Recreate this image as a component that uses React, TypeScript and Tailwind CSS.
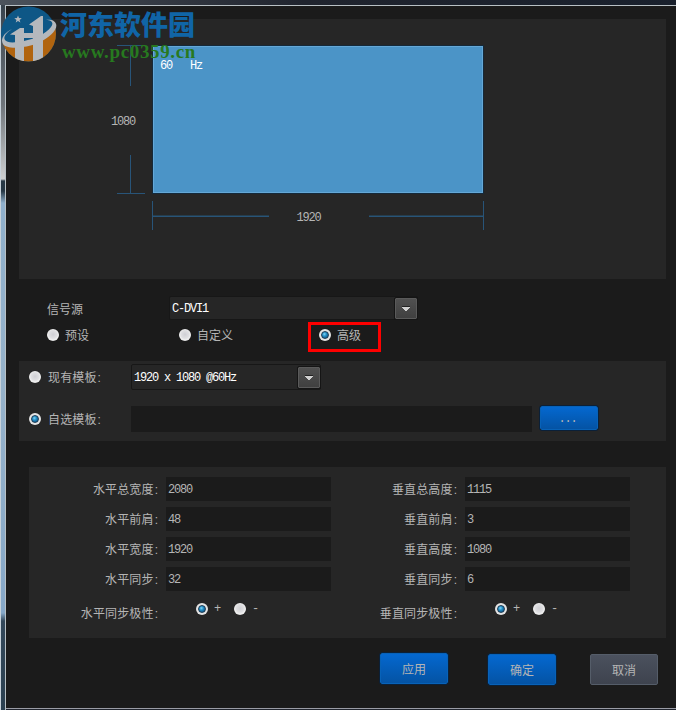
import clsx from "clsx";

const horizontalFields = [
  { label: "水平总宽度", value: "2080" },
  { label: "水平前肩", value: "48" },
  { label: "水平宽度", value: "1920" },
  { label: "水平同步", value: "32" },
];

const verticalFields = [
  { label: "垂直总高度", value: "1115" },
  { label: "垂直前肩", value: "3" },
  { label: "垂直高度", value: "1080" },
  { label: "垂直同步", value: "6" },
];

const Radio = ({ checked = false }: { checked?: boolean }) => (
  <span
    className={clsx(
      "flex size-3 shrink-0 items-center justify-center rounded-full",
      checked
        ? "bg-[#e4e4e4]"
        : "bg-[radial-gradient(circle_at_50%_45%,#cfcfd4_0%,#e0e0e2_45%,#f0f0f0_62%,#a8a8a8_100%)]"
    )}
  >
    {checked && (
      <span className="size-2 rounded-full border border-[#1d3c55] bg-[radial-gradient(circle_at_40%_35%,#7cd3f5_0%,#218cc4_40%,#0c3f6c_100%)]" />
    )}
  </span>
);

const Label = ({ children, className }: { children: string; className?: string }) => (
  <span className={clsx("pt-[3px] tracking-[0.15px]", className)}>
    {children}
    <span className="mr-px ml-px font-['Liberation_Sans',sans-serif] tracking-normal">:</span>
  </span>
);

const Select = ({ value, className }: { value: string; className: string }) => (
  <div
    className={clsx(
      "flex items-center justify-between rounded-[2px] border border-[#171717] bg-[#262626] text-white",
      className
    )}
  >
    <span className="pt-0.5">{value}</span>
    <span className="flex h-[21px] w-[22px] items-center justify-center rounded-[1px] border border-[#5a5a5a] bg-linear-to-b from-[#505050] to-[#404040] outline outline-[#151515]">
      <svg width="8" height="5" viewBox="0 0 8 5" shapeRendering="crispEdges">
        <path d="M0 0h8v1H0z" fill="#222" />
        <path d="M0 1h8v1H7v1H6v1H5v1H3V4H2V3H1V2H0z" fill="#d0d0d0" />
      </svg>
    </span>
  </div>
);

const Button = ({
  children,
  secondary = false,
  className,
}: {
  children: string;
  secondary?: boolean;
  className: string;
}) => (
  <button
    className={clsx(
      "flex items-center justify-center rounded-[2px] border",
      secondary
        ? "border-[#555d69] bg-linear-to-b from-[#4b515e] to-[#3e434e]"
        : "border-[#0762b8] bg-linear-to-b from-[#0468d0] to-[#0453a4] outline outline-[#0b2038]",
      className
    )}
  >
    {children}
  </button>
);

const Timing = ({
  fields,
  polarity,
}: {
  fields: { label: string; value: string }[];
  polarity: string;
}) => (
  <div className="w-[299px]">
    <div className="flex flex-col gap-1.5">
      {fields.map((field) => (
        <div key={field.label} className="flex h-6 items-center">
          <Label className="w-[130px] shrink-0 text-right">{field.label}</Label>
          <span className="ml-[7px] flex h-6 w-[165px] shrink-0 items-center bg-[#1b1b1b] pt-0.5 pl-0.5">
            {field.value}
          </span>
        </div>
      ))}
    </div>
    <div className="mt-3 flex h-3 items-center">
      <Label className="mt-2 w-[130px] shrink-0 text-right">{polarity}</Label>
      <span className="ml-[37px] flex items-center">
        <Radio checked />
        <span className="ml-1.5 w-5">+</span>
        <Radio />
        <span className="ml-1.5">-</span>
      </span>
    </div>
  </div>
);

const Watermark = () => (
  <div className="absolute top-1.5 left-0 flex items-start">
    <svg width="57" height="57" viewBox="0 0 57 57">
      <defs>
        <clipPath id="badge">
          <circle cx="28.5" cy="28" r="27.5" />
        </clipPath>
      </defs>
      <g clipPath="url(#badge)">
        <path d="M0 0h57v57H0z" fill="#0e5786" />
        <path d="M0 36Q30 48 57 18V57H0z" fill="#b1640f" />
        <path
          d="M10 28.5L20 22h4v35h-9V29zM29 18.5L41 10h2v43l-10 4V20zM24 27h9v5h-9z"
          fill="#b4b8bd"
        />
      </g>
      <path
        d="M12 23C4 27 0 33 3 38C7 44 26 42 38 37C51 31 58 23 56 18C55 14 50 13 46 14C52 14 54 17 51 21C46 28 34 33 24 35C14 37 7 37 5 34C3 31 6 27 12 23z"
        fill="#b4b8bd"
      />
      <path
        d="M18 9.5l1 2.6 2.8.1-2.2 1.7.8 2.7-2.4-1.5-2.3 1.5.8-2.7-2.2-1.7 2.7-.1z"
        fill="#b4b8bd"
      />
    </svg>
    <div className="ml-[3px] pt-[3px] whitespace-nowrap">
      <div className="font-['Noto_Sans_CJK_SC',sans-serif] text-[27px] leading-[30px] font-black text-[#1065a7]">
        河东软件园
      </div>
      <div className="pt-0.5 pl-0.5 font-['Liberation_Serif',serif] text-[19px] leading-[22px] font-bold tracking-[0.65px] text-[#27791f]">
        www.pc0359.cn
      </div>
    </div>
  </div>
);

const Preview = () => (
  <div className="h-[260px] bg-[#262626] pt-[26px] pl-[92px]">
    <div className="flex">
      <div className="flex h-[149px] w-[42px] flex-col justify-between">
        <div className="ml-1.5 w-7 border-t border-[#285478]">
          <div className="ml-[13px] h-10 w-px bg-[#285478]" />
        </div>
        <span className="pt-0.5 leading-3">1080</span>
        <div className="ml-1.5 w-7 border-b border-[#285478]">
          <div className="ml-[13px] h-[38px] w-px bg-[#285478]" />
        </div>
      </div>
      <div className="mt-px flex h-[147px] w-[330px] border border-[#64a7d6] bg-[#4b94c7] pt-[13px] pl-1.5 leading-3 text-white outline outline-[#14293a]">
        <span className="whitespace-pre">60   Hz</span>
      </div>
    </div>
    <div className="mt-[7px] ml-[41px] flex h-[29px] w-[332px] items-center justify-between border-x border-[#285478]">
      <div className="h-0.5 w-[116px] border-b border-[#285478] bg-[#263d4c]" />
      <span className="pt-1 pl-0.5">1920</span>
      <div className="ml-[23px] h-0.5 w-[114px] border-b border-[#285478] bg-[#263d4c]" />
    </div>
  </div>
);

export default function App() {
  return (
    <div className="relative flex h-[710px] w-[676px] flex-col overflow-hidden bg-[#1b1b1b] font-['Liberation_Mono','Noto_Sans_CJK_SC',monospace] text-[12px] leading-4 text-[#b5b5b5]">
      <div className="h-[5px] shrink-0 bg-linear-to-r from-[#4c535c] via-[#20242e] via-45% to-[#19202c]" />
      <div className="flex min-h-0 flex-1">
        <div className="w-[5px] shrink-0 border-l border-[#c8d2da] bg-[linear-gradient(to_bottom,#38434d_0px,#6f757b_100px,#cdcfd0_174px,#263744_176px,#263744_186px,#8fb0cc_198px,#96b2ca_380px,#86a8c8_608px,#33485a_616px,#2b4050_705px)]" />
        <div className="flex min-w-0 flex-1 flex-col border-t border-l border-[#b8c0c4]">
          <main className="flex-1 pt-[13px] pr-2.5 pl-[13px] tracking-[-1.2px]">
            <Preview />

            <section className="h-[82px] pt-[17px] pl-7">
              <div className="flex h-6 items-center">
                <span className="w-[122px] pt-1.5 tracking-normal">信号源</span>
                <Select value="C-DVI1" className="h-6 w-[249px] pl-0.5" />
              </div>
              <div className="mt-0.5 flex h-[30px] items-center tracking-normal">
                <div className="flex w-[132px] items-center gap-1.5 pb-1">
                  <Radio />
                  <span className="pt-[3px]">预设</span>
                </div>
                <div className="flex w-[129px] items-center gap-1.5 pb-1">
                  <Radio />
                  <span className="pt-[3px]">自定义</span>
                </div>
                <div className="flex h-[30px] w-[73px] items-center gap-1.5 border-3 border-[#fe0000] pb-1 pl-2">
                  <Radio checked />
                  <span className="pt-[3px]">高级</span>
                </div>
              </div>
            </section>

            <section className="h-20 bg-[#262626] pt-[3px] pl-2.5">
              <div className="flex h-[26px] items-center pb-px">
                <Radio />
                <Label className="ml-[7px] w-[83px]">现有模板</Label>
                <Select value="1920 x 1080 @60Hz" className="mt-px h-[26px] w-[190px] pl-0.5" />
              </div>
              <div className="mt-4 flex h-[26px] items-center">
                <Radio checked />
                <Label className="ml-[7px] w-[83px]">自选模板</Label>
                <span className="h-[26px] w-[401px] bg-[#1b1b1b]" />
                <Button className="mb-0.5 ml-2 h-6 w-[58px] pt-0.5 pr-[3px] tracking-[-1.2px]">
                  ...
                </Button>
              </div>
            </section>

            <section className="mt-[26px] ml-2.5 flex h-[171px] bg-[#262626] pt-2.5">
              <Timing fields={horizontalFields} polarity="水平同步极性" />
              <Timing fields={verticalFields} polarity="垂直同步极性" />
            </section>

            <footer className="mt-[15px] flex items-start pl-[361px] tracking-normal">
              <Button className="h-[31px] w-[68px] pt-[5px]">应用</Button>
              <Button className="mt-px ml-10 h-[31px] w-[68px] pt-[5px]">确定</Button>
              <Button secondary className="mt-px ml-[34px] h-[31px] w-[68px] pt-[5px]">
                取消
              </Button>
            </footer>
          </main>
          <div className="h-0.5 border-t border-[#9a9ca6] bg-[#20242e]" />
        </div>
      </div>
      <Watermark />
    </div>
  );
}
